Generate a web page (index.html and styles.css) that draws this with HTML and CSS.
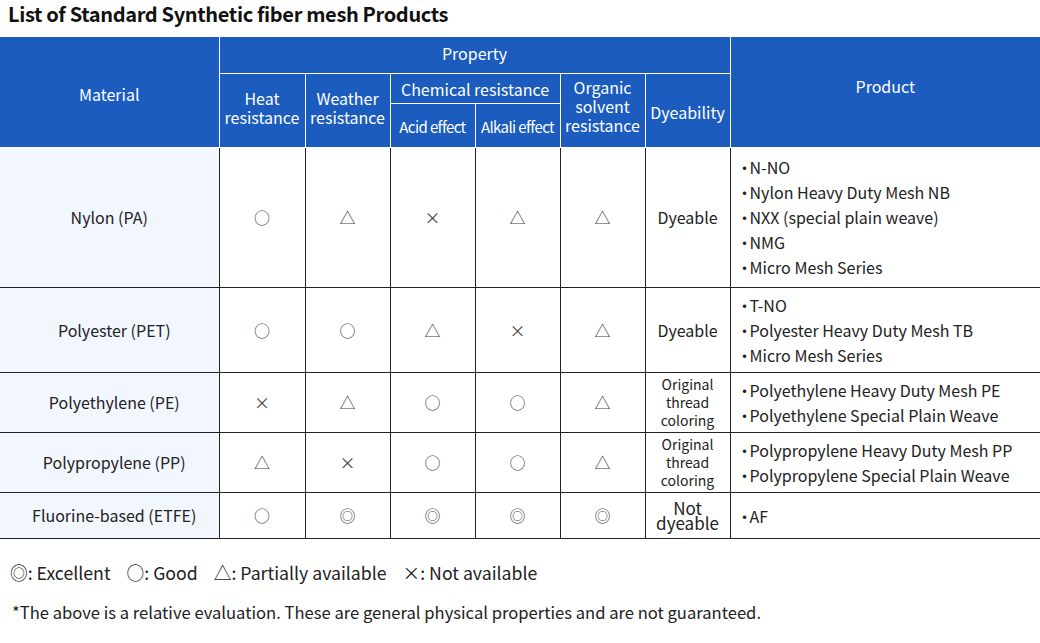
FILE: index.html
```html
<!DOCTYPE html>
<html>
<head>
<meta charset="utf-8">
<link rel="stylesheet" href="styles.css">
</head>
<body>
<h1 class="title">List of Standard Synthetic fiber mesh Products</h1>
<table class="spec">
  <colgroup>
    <col class="c-mat"><col class="c-heat"><col class="c-n"><col class="c-n"><col class="c-n"><col class="c-n"><col class="c-n"><col class="c-prod">
  </colgroup>
  <thead>
    <tr class="h1">
      <th rowspan="3" class="mat">Material</th>
      <th colspan="6" class="prop">Property</th>
      <th rowspan="3" class="product">Product</th>
    </tr>
    <tr class="h2">
      <th rowspan="2" class="two">Heat<br>resistance</th>
      <th rowspan="2" class="two">Weather<br>resistance</th>
      <th colspan="2" class="chem">Chemical resistance</th>
      <th rowspan="2" class="three">Organic<br>solvent<br>resistance</th>
      <th rowspan="2" class="dyeh">Dyeability</th>
    </tr>
    <tr class="h3">
      <th class="narrow">Acid effect</th>
      <th class="narrow">Alkali effect</th>
    </tr>
  </thead>
  <tbody>
    <tr class="r1">
      <th>Nylon (PA)</th>
      <td>○</td><td>△</td><td>×</td><td>△</td><td>△</td>
      <td class="dye">Dyeable</td>
      <td class="prod first"><ul><li>N-NO</li><li>Nylon Heavy Duty Mesh NB</li><li>NXX (special plain weave)</li><li>NMG</li><li>Micro Mesh Series</li></ul></td>
    </tr>
    <tr class="r2">
      <th class="shift">Polyester (PET)</th>
      <td>○</td><td>○</td><td>△</td><td>×</td><td>△</td>
      <td class="dye">Dyeable</td>
      <td class="prod"><ul><li>T-NO</li><li>Polyester Heavy Duty Mesh TB</li><li>Micro Mesh Series</li></ul></td>
    </tr>
    <tr class="r3">
      <th class="shift">Polyethylene (PE)</th>
      <td>×</td><td>△</td><td>○</td><td>○</td><td>△</td>
      <td class="dye small">Original<br>thread<br>coloring</td>
      <td class="prod"><ul><li>Polyethylene Heavy Duty Mesh PE</li><li>Polyethylene Special Plain Weave</li></ul></td>
    </tr>
    <tr class="r3">
      <th class="shift">Polypropylene (PP)</th>
      <td>△</td><td>×</td><td>○</td><td>○</td><td>△</td>
      <td class="dye small">Original<br>thread<br>coloring</td>
      <td class="prod"><ul><li>Polypropylene Heavy Duty Mesh PP</li><li>Polypropylene Special Plain Weave</li></ul></td>
    </tr>
    <tr class="r5">
      <th class="shift">Fluorine-based (ETFE)</th>
      <td>○</td><td>◎</td><td>◎</td><td>◎</td><td>◎</td>
      <td class="dye tight">Not<br>dyeable</td>
      <td class="prod"><ul><li>AF</li></ul></td>
    </tr>
  </tbody>
</table>
<p class="legend"><span>◎: Excellent</span><span>○: Good</span><span>△: Partially available</span><span>×: Not available</span></p>
<p class="note">*The above is a relative evaluation. These are general physical properties and are not guaranteed.</p>
</body>
</html>
```
FILE: styles.css
```css
html, body {
  margin: 0;
  padding: 0;
  background: #fff;
}
body {
  font-family: "Noto Sans CJK JP", "Noto Sans", sans-serif;
  color: #222;
  width: 1040px;
}
.title {
  margin: 0;
  padding: 0 0 0 8px;
  height: 37px;
  font-size: 20px;
  font-weight: 700;
  line-height: 28px;
  color: #111;
  letter-spacing: -0.35px;
}
.spec {
  width: 1040px;
  border-collapse: collapse;
  table-layout: fixed;
}
.c-mat { width: 219px; }
.c-heat { width: 86px; }
.c-n { width: 85px; }
.c-prod { width: 310px; }

.spec thead th {
  background: #1b5cbe;
  color: #fff;
  font-weight: 400;
  font-size: 16px;
  border: 1px solid #fff;
  padding: 0;
  line-height: 19px;
}
.spec thead tr:first-child th { border-top: none; }
.spec thead th:first-child { border-left: none; }
.spec thead tr:first-child th:last-child { border-right: none; }
.h1 { height: 36px; }
.h2 { height: 30px; }
.h3 { height: 44px; }
.spec thead th.mat { padding-top: 6px; }
.spec thead th.product { padding-bottom: 10px; }
.spec thead th.prop { padding-bottom: 2px; }
.spec thead th.chem { padding-top: 2px; }
.spec thead th.two { padding-bottom: 4px; }
.spec thead th.three { padding-bottom: 8px; }
.spec thead th.dyeh { padding-top: 4px; }
.spec thead th.narrow {
  font-size: 15px;
  letter-spacing: -0.6px;
  padding-top: 2px;
}

.spec tbody th,
.spec tbody td {
  border: 1px solid #222;
  padding: 0;
  text-align: center;
  font-size: 16px;
}
.spec tbody tr td:last-child { border-right: none; }
.spec tbody th {
  background: #f2f7ff;
  font-weight: 400;
  border-left: none;
  color: #222;
}
.spec tbody th.shift { padding-left: 10px; }
.spec tbody td {
  color: #444;
}
.spec tbody td.dye { color: #222; }
.r1 { height: 140px; }
.r2 { height: 85px; }
.r3 { height: 60px; }
.r5 { height: 46px; }
.spec tbody td.small {
  font-size: 14px;
  line-height: 18px;
}
.spec tbody td.tight {
  font-size: 17px;
  line-height: 15px;
}
.spec tbody td.prod {
  text-align: left;
  padding-left: 6px;
  padding-top: 2px;
  color: #222;
}
.spec tbody td.prod.first { padding-top: 0; }
.prod ul {
  list-style: none;
  margin: 0;
  padding: 0;
}
.prod li {
  line-height: 25px;
}
.prod li::before {
  content: "・";
  display: inline-block;
  width: 13px;
}
.legend {
  margin: 0;
  padding: 22px 0 0 10px;
  font-size: 17.7px;
  line-height: 22px;
  display: flex;
  gap: 16px;
}
.note {
  margin: 0;
  padding: 18px 0 0 12px;
  font-size: 16.6px;
  line-height: 22px;
}
```
